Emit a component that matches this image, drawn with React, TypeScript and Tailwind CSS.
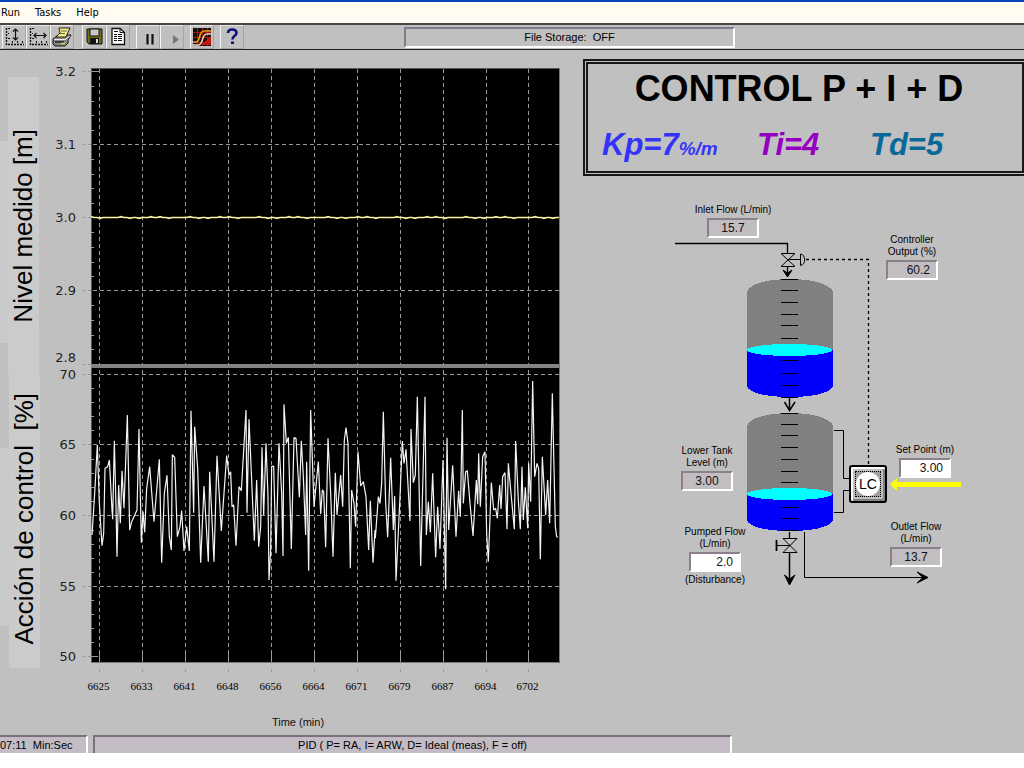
import type { ReactNode } from "react";

const CONTROL_ACTION =
  "36,525 44,400 52,255 58,430 66,557 71,520 75,325 83,320 88,300 96,450 98,478 103,242 108,440 111,590 116,375 121,490 126,332 132,445 142,165 149,510 155,485 171,450 177,207 184,548 189,455 194,517 200,385 209,320 222,485 238,298 245,608 253,400 261,346 268,530 274,570 277,284 284,292 292,530 300,500 305,452 312,573 320,500 328,573 333,152 341,458 344,200 353,325 362,608 372,378 385,605 389,335 402,605 411,287 424,513 440,287 447,345 452,335 456,440 461,435 468,557 477,380 484,392 498,150 501,458 507,178 " +
  "516,385 523,542 530,360 536,560 542,500 546,262 551,465 558,250 564,410 567,660 572,570 575,320 581,318 588,580 597,250 605,400 609,588 612,133 619,250 625,232 634,567 642,233 648,235 658,412 664,242 670,350 677,525 680,305 686,632 692,150 702,440 715,305 722,462 727,390 731,395 737,562 744,235 752,400 759,590 766,338 771,465 782,345 788,440 793,240 798,203 804,250 811,625 815,390 822,430 827,500 834,275 842,378 850,365 858,410 866,570 871,422 879,608 885,510 886,535 895,410 900,430 905,370 910,155 917,430 923,532 932,293 940,510 944,408 948,662 960,410 " +
  "967,243 972,310 978,268 990,483 993,207 1000,368 1006,345 1012,110 1022,618 1035,110 1039,525 1045,425 1051,517 1058,340 1067,592 1073,440 1080,567 1089,300 1097,688 1101,233 1106,510 1118,316 1128,530 1136,392 1141,470 1147,150 1150,430 1157,335 1162,332 1170,430 1179,528 1189,360 1193,433 1196,280 1201,440 1208,290 1215,275 1220,520 1225,605 1234,368 1241,450 1247,445 1252,475 1259,375 1263,447 1268,350 1275,338 1281,508 1285,310 1293,400 1303,508 1307,243 1315,420 1321,508 1326,320 1330,480 1336,382 1343,505 1346,310 1352,425 1358,63 1364,350 1371,310 1376,325 1381,598 1387,290 1397,465 1403,360 1409,490 1417,100 1426,500 1430,530 1434,532";

const X_TICKS: [number, string][] = [
  [99.5, "6625"], [142.5, "6633"], [185.5, "6641"], [228.5, "6648"],
  [271.5, "6656"], [314.5, "6664"], [357.5, "6671"], [400.5, "6679"],
  [443.5, "6687"], [486.5, "6694"], [528.5, "6702"],
];

const Y_TICKS: [number, string, number][] = [
  [71.5, "3.2", 76], [144.5, "3.1", 149], [217.5, "3.0", 222], [290.5, "2.9", 295],
  [364.5, "2.8", 362], [374.5, "70", 379], [444.5, "65", 449], [515.5, "60", 520],
  [586.5, "55", 591], [656.5, "50", 661],
];

const GRID_Y = [144.5, 290.5, 374.5, 444.5, 515.5, 586.5];

const MINOR = [
  86, 101, 115, 130, 159, 174, 188, 203, 232, 247, 262, 276, 305, 320, 335, 349,
  388, 402, 416, 430, 459, 473, 487, 501, 530, 544, 558, 572, 600, 614, 628, 642,
];

const LEVEL = Array.from({ length: 157 }, (_, i) => {
  const wobble = (i * 7919) % 23;
  const dy = wobble < 3 ? -1 : wobble > 19 ? 1 : 0;
  return `${91 + i * 3},${217.5 + dy}`;
}).join(" ");

function Chart() {
  return (
    <svg viewBox="40 50 543 685" className="block h-auto w-full" role="img" aria-label="Time (min)">
      <rect x="91" y="68" width="469" height="595" fill="#000" />
      <path d="M91 68.5H560M91.5 68V663" stroke="#555" fill="none" />
      <path d="M91 662.5H559.5V68" stroke="#777" strokeWidth="1" fill="none" />
      <g stroke="#9a9a9a" fill="none" shapeRendering="crispEdges">
        {GRID_Y.map((y) => (
          <path key={y} d={`M93 ${y}H559`} strokeDasharray="4 3" />
        ))}
        {X_TICKS.map(([x]) => (
          <g key={x}>
            <path d={`M${x} 69V650`} strokeDasharray="4 3" />
            <path d={`M${x} 650V662M${x} 669V672`} />
          </g>
        ))}
        {Y_TICKS.map(([y]) => (
          <path key={y} d={`M83 ${y}H91`} strokeDasharray="3 2" />
        ))}
        <path d="M91 71.5H99M91 656.5H98" />
        {MINOR.map((y) => (
          <path key={y} d={`M91 ${y + 0.5}H94`} />
        ))}
      </g>
      <rect x="91" y="364" width="468" height="4" fill="#848484" />
      <polyline points={LEVEL} fill="none" stroke="#f4ee7c" strokeWidth="1.5" />
      <path d="M92 217.5H558" stroke="#fffce0" strokeWidth="1" opacity="0.6" />
      <g transform="translate(80 360) scale(0.33333)">
        <polyline points={CONTROL_ACTION} fill="none" stroke="#f4f4f4" strokeWidth="3.6" strokeLinejoin="bevel" />
      </g>
      <g fill="#222" fontFamily="DejaVu Sans, sans-serif" fontSize="13" textAnchor="end">
        {Y_TICKS.map(([, label, base]) => (
          <text key={label} x="76" y={base}>{label}</text>
        ))}
      </g>
      <g fill="#000" fontFamily="Liberation Serif, serif" fontSize="11" textAnchor="middle">
        {X_TICKS.map(([x, label]) => (
          <text key={label} x={x - 1} y="690">{label}</text>
        ))}
      </g>
      <text x="298" y="726" fill="#111" fontFamily="Liberation Sans, sans-serif" fontSize="11" textAnchor="middle">
        Time (min)
      </text>
    </svg>
  );
}

function ToolButton({ label, className = "", children }: { label: string; className?: string; children: ReactNode }) {
  return (
    <button
      type="button"
      aria-label={label}
      className={`flex h-6 w-6 items-center justify-center border border-t-[#e4e4e4] border-r-[#a4a4a4] border-b-[#a4a4a4] border-l-[#f4f4f4] ${className}`}
    >
      <svg viewBox="0 0 20 20" className="h-5 w-5" fill="none" stroke="#111">
        {children}
      </svg>
    </button>
  );
}

function Toolbar() {
  return (
    <div className="flex h-6 items-center pl-0.5">
      <ToolButton label="Scale Y axis">
        <path d="M2.5 1V17.5H20" strokeDasharray="2 1" strokeWidth="1.4" />
        <path d="M4 1.5H6M4 6.5H5M4 11.5H6M8.5 16V14M13.5 16V14M18.5 16V14" />
        <path d="M11.5 2V13M9 4.5L11.5 2L14 4.5M9 10.5L11.5 13L14 10.5" strokeWidth="1.2" />
      </ToolButton>
      <ToolButton label="Scale X axis">
        <path d="M2.5 1V17.5H20" strokeDasharray="2 1" strokeWidth="1.4" />
        <path d="M4 1.5H6M4 6.5H5M4 11.5H6M8.5 16V14M13.5 16V14M18.5 16V14" />
        <path d="M6 8.5H18M8.5 6L6 8.5L8.5 11M15.5 6L18 8.5L15.5 11" strokeWidth="1.2" />
      </ToolButton>
      <ToolButton label="Print">
        <path d="M1 12L6 8H19L16 13V16L13 19H3L1 17Z" fill="#888" stroke="#111" />
        <path d="M7 1H18L14 10H4L8 6Z" fill="#f5ef7a" stroke="#222" />
        <path d="M9 4H15M8 6.5H13" stroke="#666" />
        <path d="M2 12.5H13L18 9" stroke="#eee" />
        <path d="M3 15H12" stroke="#223" strokeWidth="1.5" />
        <path d="M9 16.5H13" stroke="#e8d820" strokeWidth="1.5" />
      </ToolButton>
      <ToolButton label="Save" className="ml-2">
        <path d="M3 2H18V17H5L3 15Z" fill="#6e6e14" stroke="#111" />
        <rect x="6" y="2" width="9" height="7" fill="#c8c8c8" stroke="#111" />
        <rect x="6" y="11" width="9" height="6" fill="#111" stroke="none" />
        <rect x="12" y="12" width="2" height="4" fill="#ddd" stroke="none" />
      </ToolButton>
      <ToolButton label="Report">
        <path d="M4 1.5H12L16.5 5.5V17.5H4Z" fill="#fff" strokeWidth="1.3" />
        <path d="M12 1.5V5.5H16.5M6 4.5H10M6 7.5H9M10 7.5H14M6 9.5H9M10 9.5H14M6 11.5H9M10 11.5H14M6 13.5H9M10 13.5H14" />
      </ToolButton>
      <ToolButton label="Pause" className="ml-1.5">
        <path d="M9.5 7V17.5M14.5 7V17.5" strokeWidth="2.2" />
      </ToolButton>
      <ToolButton label="Play">
        <path d="M11 8V17L17 12.5Z" fill="#777" stroke="none" />
      </ToolButton>
      <ToolButton label="Trends" className="ml-1.5">
        <rect x="1" y="1" width="18" height="18" fill="#1a0c08" stroke="none" />
        <path d="M1 5.5H19M1 10.5H19M1 15.5H19M5.5 1V19M10.5 1V19M15.5 1V19" stroke="#a01810" />
        <path d="M9 18H19V9Z" fill="#c01810" stroke="none" />
        <path d="M1 15H4C9 15 6 4 12 4H19" stroke="#f0a018" strokeWidth="1.6" />
        <path d="M1 18H6C12 18 9 7 15 7H19" stroke="#f0d8c0" strokeWidth="1.5" />
      </ToolButton>
      <ToolButton label="Help" className="ml-1.5">
        <path d="M6 6C6 3.5 8 2.5 10 2.5C12.5 2.5 14.5 3.5 14.5 6C14.5 9 10.5 8.5 10.5 12.5" stroke="#101080" strokeWidth="2.6" />
        <path d="M9 14.5H12V17H9Z" fill="#101080" stroke="none" />
      </ToolButton>
      <div className="ml-40 flex h-[21px] w-[331px] items-center justify-center border-2 border-t-[#847c8c] border-r-white border-b-white border-l-[#847c8c] text-[11px] leading-3 whitespace-pre">
        File Storage:  OFF
      </div>
    </div>
  );
}

const BOX =
  "box-border h-5 w-[52px] border-2 border-t-[#8a7f8a] border-l-[#8a7f8a] border-r-white border-b-white text-xs leading-4 text-[#111]";

function Field({ id, lines, value, note, place, align = "text-center", editable = false }: {
  id: string; lines: string[]; value: string; note?: string; place: string; align?: string; editable?: boolean;
}) {
  return (
    <div className={`absolute flex w-24 flex-col items-center ${place}`}>
      <label htmlFor={id} className="mb-0.5 text-center text-[10px] leading-3 whitespace-nowrap">
        {lines.map((line) => (
          <span key={line} className="block">{line}</span>
        ))}
      </label>
      {editable ? (
        <input id={id} defaultValue={value} className={`${BOX} bg-white ${align}`} />
      ) : (
        <output id={id} className={`${BOX} block bg-[#c1bdc1] ${align}`}>{value}</output>
      )}
      {note && <span className="mt-0.5 text-[10px] leading-3">{note}</span>}
    </div>
  );
}

function Tank({ top, level, ticks }: { top: number; level: number; ticks: number[] }) {
  const bottom = top + 118;
  return (
    <g shapeRendering="crispEdges" stroke="none">
      <path d={`M746.5 ${top + 13}C750 ${top + 4} 770 ${top} 790 ${top}C810 ${top} 830 ${top + 4} 833 ${top + 13}V${level}H746.5Z`} fill="#808080" />
      <path d={`M746.5 ${level}H833V${bottom - 11}C830 ${bottom - 3} 810 ${bottom} 790 ${bottom}C770 ${bottom} 750 ${bottom - 3} 746.5 ${bottom - 11}Z`} fill="#0000fc" />
      <ellipse cx="789.5" cy={level} rx="43" ry="6" fill="#00ffff" />
      {ticks.map((y) => (
        <path key={y} d={`M781 ${y + 0.5}H798`} stroke="#000" />
      ))}
    </g>
  );
}

function ProcessDiagram() {
  return (
    <div className="relative h-[424px] w-[400px]">
      <svg viewBox="583 176 400 424" className="block h-[424px] w-[400px]" fill="none" stroke="#000">
        <path d="M675 243.5H787.5V253" strokeWidth="1.3" />
        <path d="M781 253.5H795L781 266.5H795Z" />
        <path d="M788 259.5H800.5M800.5 254V265.5C806 265 806 254.5 800.5 254" />
        <path d="M806 259.5H868.5V465" strokeDasharray="3 3" strokeWidth="1.3" />
        <path d="M787.5 266V276" strokeWidth="1.3" />
        <path d="M783 270L787.5 277L792 270L787.5 273Z" fill="#000" />
        <Tank top={279} level={350} ticks={[279, 290, 302, 314, 325, 338, 360, 373, 385, 397]} />
        <path d="M789.5 398V410M784.5 402L789.5 410.5L795 402" strokeWidth="1.5" />
        <Tank top={413} level={494} ticks={[413, 424, 435, 447, 459, 471, 482, 507, 518, 530]} />
        <path d="M834 430.5H843.5V478.5H850M834 512.5H843.5V490.5H850" />
        <path d="M789.5 532V538" strokeWidth="1.3" />
        <path d="M783 538.5H797L783 552.5H797Z" />
        <path d="M777 545.5H790" />
        <path d="M776.5 540V551" strokeWidth="1.8" />
        <path d="M789.5 552V584" strokeWidth="1.5" />
        <path d="M784.5 575L789.5 585L795 575L789.5 579Z" fill="#000" />
        <path d="M804.5 532V577.5H924" />
        <path d="M917 572L928 577.5L917 583L923 577.5Z" fill="#000" />
        <path d="M961 482H897V478L890 484.5L897 491V487H961Z" fill="#ffff00" stroke="none" />
      </svg>

      <Field id="inlet" lines={["Inlet Flow (L/min)"]} value="15.7" place="top-[28px] left-[102px]" />
      <Field id="output" lines={["Controller", "Output (%)"]} value="60.2" align="pr-1.5 text-right" place="top-[58px] left-[281px]" />
      <Field id="lower" lines={["Lower Tank", "Level (m)"]} value="3.00" place="top-[269px] left-[76px]" />
      <Field id="setpoint" lines={["Set Point (m)"]} value="3.00" align="pr-1.5 text-right" editable place="top-[268px] left-[294px]" />
      <Field id="outlet" lines={["Outlet Flow", "(L/min)"]} value="13.7" place="top-[345px] left-[285px]" />
      <Field id="pumped" lines={["Pumped Flow", "(L/min)"]} value="2.0" align="pr-1.5 text-right" editable note="(Disturbance)" place="top-[350px] left-[84px]" />

      <button
        type="button"
        className="absolute top-[289px] left-[266px] flex h-[38px] w-[38px] items-center justify-center rounded-[3px] border-2 border-black bg-[#c0c0c0] shadow-[inset_2px_2px_0_#fff,inset_-2px_-2px_0_#808080]"
      >
        <span className="flex h-[26px] w-[26px] items-center justify-center border border-dotted border-black bg-[#a0a0a0]">
          <span className="flex h-6 w-6 shrink-0 items-center justify-center rounded-full bg-white text-sm leading-4">
            LC
          </span>
        </span>
      </button>
    </div>
  );
}

export default function App() {
  return (
    <div className="min-h-screen bg-white font-['Liberation_Sans',Arial,sans-serif] text-black">
      <div className="overflow-hidden bg-[#c0c0c0]">
        <header>
          <nav className="flex h-[23px] items-center gap-[15px] border-t-2 border-[#0842b8] bg-[#fffbf0] pl-px font-['DejaVu_Sans_Condensed','DejaVu_Sans',sans-serif] text-[11px] leading-4">
            <button type="button">Run</button>
            <button type="button">Tasks</button>
            <button type="button">Help</button>
          </nav>
          <div className="border-t-2 border-b border-t-[#4a4648] border-b-[#202020]">
            <Toolbar />
          </div>
        </header>

        <main className="grid grid-cols-[583fr_441fr]">
          <section className="flex min-w-0">
            <div className="w-10 shrink-0 pt-[27px] text-[26px] leading-[31px]">
              <div className="flex h-[298px]">
                <div className="mt-16 h-[202px] w-2 bg-[#c9c9c9]" />
                <div className="flex w-[31px] items-center justify-center bg-[#cbcbcb]">
                  <span className="rotate-180 whitespace-pre [writing-mode:vertical-rl]">Nivel medido [m]</span>
                </div>
              </div>
              <div className="flex h-[293px]">
                <div className="mt-[73px] h-[178px] w-[9px] bg-[#c9c9c9]" />
                <div className="flex w-[31px] items-end justify-center bg-[#cbcbcb] pb-6">
                  <span className="rotate-180 whitespace-pre [writing-mode:vertical-rl]">Acción de control  [%]</span>
                </div>
              </div>
            </div>
            <div className="min-w-0 flex-1">
              <Chart />
            </div>
          </section>

          <section className="min-w-0">
            <div className="mt-[9px] -mr-[3px] h-[117px] border-[5px] border-double border-[#181818] pt-[5px] font-bold">
              <h1 className="pr-3 text-center text-4xl leading-10">CONTROL P + I + D</h1>
              <div className="mt-4 flex items-baseline pl-3.5 text-[31px] leading-10 italic">
                <span className="w-[155px] text-[#3434f8]">
                  Kp=7<span className="text-[19px]">%/m</span>
                </span>
                <span className="w-[113px] text-[#9400c0]">Ti=4</span>
                <span className="text-[#086898]">Td=5</span>
              </div>
            </div>
            <ProcessDiagram />
          </section>
        </main>

        <footer className="flex h-[18px] gap-[5px] text-[11px] leading-4">
          <div className="w-[88px] border-t-2 border-r-2 border-t-[#7c7080] border-r-white bg-[#c4bcc4] whitespace-pre">
            07:11  Min:Sec
          </div>
          <div className="w-[639px] border-t-2 border-r-2 border-l-2 border-t-[#7c7080] border-r-white border-l-[#7c7080] bg-[#c4bcc4] text-center">
            PID ( P= RA, I= ARW, D= Ideal (meas), F = off)
          </div>
        </footer>
      </div>
    </div>
  );
}
